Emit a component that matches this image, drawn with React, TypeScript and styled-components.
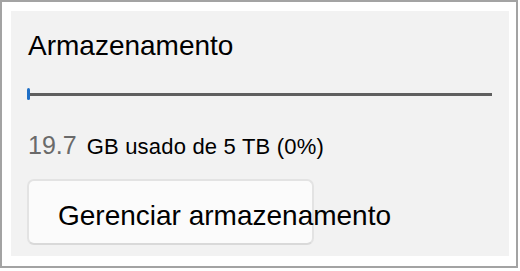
import React from "react";
import styled, { createGlobalStyle } from "styled-components";

const Global = createGlobalStyle`
  html, body { margin: 0; padding: 0; background: #ffffff; }
  body { font-family: "Liberation Sans", Arial, sans-serif; }
`;

const Frame = styled.div`
  box-sizing: border-box;
  width: 518px;
  height: 268px;
  border: 2px solid #a3a3a3;
  background: #ffffff;
  padding: 9px 7px 10px 9px;
  display: flex;
`;

const Panel = styled.section`
  flex: 1;
  background: #f2f2f2;
  display: flex;
  flex-direction: column;
  padding: 19px 17px 0 16px;
`;

const Title = styled.h2`
  margin: 0;
  font-weight: 400;
  font-size: 28px;
  line-height: 32px;
  color: #000000;
  padding-left: 1px;
`;

const Slider = styled.div`
  position: relative;
  margin-top: 26px;
  height: 12px;
  display: flex;
  align-items: center;
`;

const Track = styled.div`
  flex: 1;
  height: 3px;
  background: #5f5f5f;
`;

const Thumb = styled.div`
  position: absolute;
  top: 0;
  width: 3px;
  height: 12px;
  border-radius: 1.5px;
  background: #1f6fc6;
`;

const Info = styled.div`
  margin-top: 30px;
  display: flex;
  align-items: baseline;
  line-height: 30px;
  padding-left: 1px;
`;

const Amount = styled.span`
  font-size: 25px;
  color: #6a6a6a;
  margin-right: 10px;
`;

const Detail = styled.span`
  font-size: 22px;
  letter-spacing: 0.2px;
  color: #000000;
`;

const Button = styled.button`
  box-sizing: border-box;
  margin-top: 17px;
  width: 287px;
  height: 66px;
  border: 2px solid #e3e3e3;
  border-bottom-color: #d9d9d9;
  border-radius: 7px;
  background: #fbfbfb;
  display: flex;
  align-items: center;
  padding: 7px 0 0 29px;
  font-family: "Liberation Sans", Arial, sans-serif;
  font-size: 28px;
  line-height: 32px;
  color: #000000;
  white-space: nowrap;
  overflow: visible;
  text-align: left;
  cursor: pointer;
`;

export default function App() {
  const pct = 0;
  return (
    <>
      <Global />
      <Frame>
        <Panel>
          <Title>Armazenamento</Title>
          <Slider>
            <Track />
            <Thumb style={{ left: `${pct}%` }} />
          </Slider>
          <Info>
            <Amount>19.7</Amount>
            <Detail>GB usado de 5 TB (0%)</Detail>
          </Info>
          <Button>Gerenciar armazenamento</Button>
        </Panel>
      </Frame>
    </>
  );
}
